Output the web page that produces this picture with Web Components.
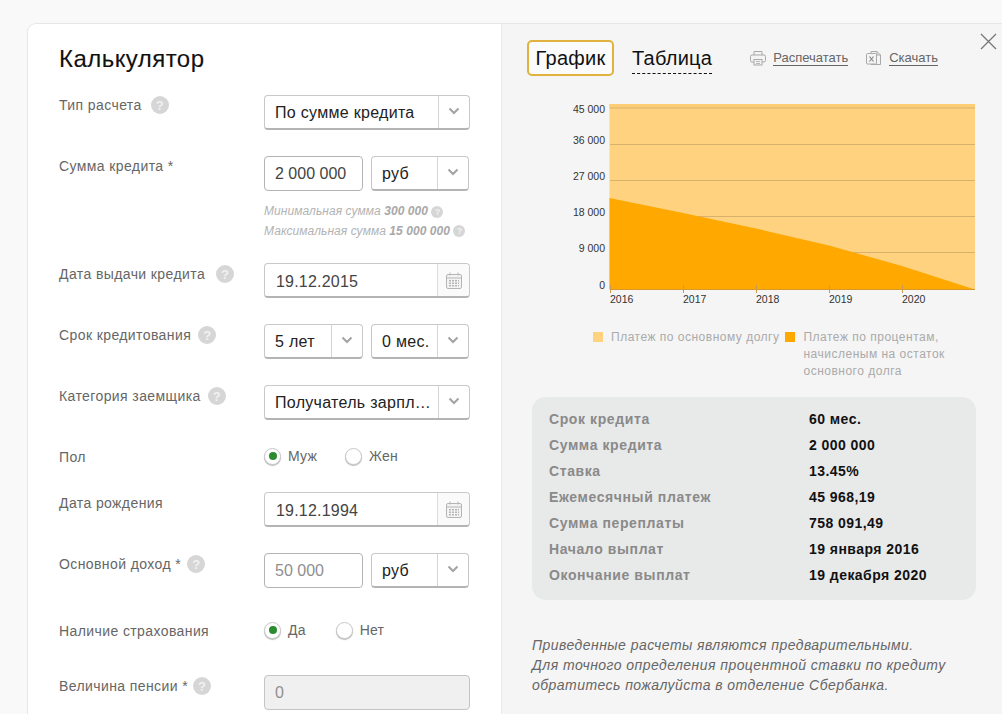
<!DOCTYPE html>
<html lang="ru"><head><meta charset="utf-8"><title>Калькулятор</title>
<style>
html,body{margin:0;height:714px;overflow:hidden;background:#f9f9f9;font-family:"Liberation Sans",Arial,sans-serif}
</style></head><body>
<x-app>
  <x-calculator title="Калькулятор">
    <x-field label="Тип расчета" help="9" up style="margin-bottom:26px"><x-select value="По сумме кредита" w="206" sep="32"></x-select></x-field>
    <x-field label="Сумма кредита *" up style="margin-bottom:26px">
      <x-input value="2 000 000" w="99"></x-input><x-select value="руб" w="98" sep="32"></x-select>
      <x-hints></x-hints>
    </x-field>
    <x-field label="Дата выдачи кредита" help="11" style="margin-bottom:26px"><x-date value="19.12.2015"></x-date></x-field>
    <x-field label="Срок кредитования" help="7" style="margin-bottom:26px"><x-select value="5 лет" w="99" sep="32"></x-select><x-select value="0 мес." w="98" sep="32"></x-select></x-field>
    <x-field label="Категория заемщика" help="7" style="margin-bottom:26px"><x-select value="Получатель зарпл…" w="206" sep="32"></x-select></x-field>
    <x-field label="Пол" short style="margin-bottom:26px"><x-radio a="Муж" b="Жен" gap="28"></x-radio></x-field>
    <x-field label="Дата рождения" style="margin-bottom:26px"><x-date value="19.12.1994"></x-date></x-field>
    <x-field label="Основной доход *" help="6" style="margin-bottom:32px"><x-input value="50 000" w="99" muted></x-input><x-select value="руб" w="98" sep="32"></x-select></x-field>
    <x-field label="Наличие страхования" short style="margin-bottom:35px"><x-radio a="Да" b="Нет" gap="30"></x-radio></x-field>
    <x-field label="Величина пенсии *" help="5"><x-input value="0" w="206" disabled></x-input></x-field>
  </x-calculator>
  <x-panel>
    <x-toolbar></x-toolbar>
    <x-chart></x-chart>
    <x-legend></x-legend>
    <x-results></x-results>
    <x-note></x-note>
  </x-panel>
</x-app>
<script>
const def=(name,html)=>customElements.define(name,class extends HTMLElement{
  connectedCallback(){if(this.shadowRoot)return;const r=this.attachShadow({mode:'open'});
    r.innerHTML=typeof html==='function'?html(this):html;}
});
const chev=`<svg width="12" height="8" viewBox="0 0 12 8"><path d="M1.5 1.5 6 6l4.5-4.5" fill="none" stroke="#a3a3a3" stroke-width="2"/></svg>`;
const cal=`<svg width="16" height="17" viewBox="0 0 16 17" fill="none" stroke="#b5b5b5"><rect x=".5" y="2.5" width="15" height="14" rx="1.5" fill="#f4f4f4"/><path d="M.5 6h15M4 .5v3M12 .5v3"/><path stroke-width="1.4" stroke-dasharray="2 1" d="M3 8.7h10M3 11.2h10M3 13.7h10"/></svg>`;
const q=(s,f)=>`<span style="display:inline-flex;align-items:center;justify-content:center;width:${s}px;height:${s}px;border-radius:50%;background:#d6d6d6;color:#f1f1f1;font:bold ${f}px 'Liberation Sans',sans-serif;letter-spacing:0;vertical-align:middle">?</span>`;

def('x-app',`<style>:host{display:flex;margin:23px 0 0 27px;height:691px;align-items:stretch;position:relative}</style><slot></slot>`);

def('x-calculator',h=>`<style>
:host{display:block;flex:none;box-sizing:border-box;width:475px;background:#fff;border:1px solid #e6e6e6;border-right:0;border-bottom:0;border-top-left-radius:9px;padding:20px 0 0 31px;overflow:hidden}
h1{font:400 24px/30px "Liberation Sans",sans-serif;color:#111;margin:0 0 21px;letter-spacing:.45px;-webkit-text-stroke:.1px #111}
</style><h1>${h.getAttribute('title')}</h1><slot></slot>`);

def('x-field',h=>{const s=h.hasAttribute('short'),u=h.hasAttribute('up');return `<style>
:host{display:grid;grid-template-columns:205px 206px;align-items:start;${s?'height:20px;':''}}
.l{font-size:14px;line-height:20px;color:#666;margin-top:${u?0:1}px;display:flex;align-items:center;gap:${h.getAttribute('help')||9}px;letter-spacing:.4px;white-space:nowrap}
.c{display:flex;flex-wrap:wrap;column-gap:8px;min-height:${s?20:35}px}
</style><div class="l"><span>${h.getAttribute('label')}</span>${h.hasAttribute('help')?q(18,13):''}</div><div class="c"><slot></slot></div>`});

def('x-select',h=>`<style>
:host{display:flex;box-sizing:border-box;width:${h.getAttribute('w')}px;height:35px;background:#fff;border:1px solid #c9c9c9;border-bottom:2px solid #b4b4b4;border-radius:4px;font-size:16px;color:#222;letter-spacing:.3px}
.v{flex:1;min-width:0;padding:0 0 0 10px;line-height:33px;white-space:nowrap}
.a{flex:none;width:${h.getAttribute('sep')-1}px;border-left:1px solid #d4d4d4;display:flex;align-items:center;justify-content:center;padding-bottom:3px;box-sizing:border-box}
</style><div class="v">${h.getAttribute('value')}</div><div class="a">${chev}</div>`);

def('x-input',h=>{const d=h.hasAttribute('disabled'),m=h.hasAttribute('muted');return `<style>
:host{display:block;box-sizing:border-box;width:${h.getAttribute('w')}px;height:35px;background:${d?'#f0f0f0':'#fff'};border:1px solid ${d?'#c4c4c4':'#b3b3b3'};border-radius:4px;font-size:16px;line-height:33px;padding:0 10px;color:${d||m?'#8f8f8f':'#444'}}
</style>${h.getAttribute('value')}`});

def('x-date',h=>`<style>
:host{display:flex;box-sizing:border-box;width:206px;height:35px;background:#fff;border:1px solid #c9c9c9;border-bottom:2px solid #b4b4b4;border-radius:4px;font-size:16px;color:#444;letter-spacing:.2px}
.v{flex:1;padding-left:11px;line-height:35px}
.a{width:31px;border-left:1px solid #dcdcdc;display:flex;align-items:center;justify-content:center;background:#fafafa;border-radius:0 4px 4px 0}
</style><div class="v">${h.getAttribute('value')}</div><div class="a">${cal}</div>`);

def('x-hints',`<style>
:host{display:block;width:100%;height:35px;margin-top:11px;font:italic 12px/19.5px "Liberation Sans",sans-serif;color:#b3b3b3;white-space:nowrap;letter-spacing:.06px}
b{color:#a8a8a8}
</style><div>Минимальная сумма <b>300 000</b> ${q(12,9)}</div><div>Максимальная сумма <b>15 000 000</b> ${q(12,9)}</div>`);

const rb=(on)=>`<span class="r">${on?'<i></i>':''}</span>`;
def('x-radio',h=>`<style>
:host{display:flex;align-items:center;height:20px;font-size:14px;color:#666;letter-spacing:.2px}
.r{box-sizing:border-box;width:17px;height:17px;border-radius:50%;border:1px solid #c8c8c8;background:#fff;box-shadow:0 1px 1px #bbb;display:inline-flex;align-items:center;justify-content:center;margin-right:7px;flex:none}
i{width:8px;height:8px;border-radius:50%;background:#2a8c2f}
.g{width:${h.getAttribute('gap')}px}
</style>${rb(1)}<span>${h.getAttribute('a')}</span><span class="g"></span>${rb(0)}<span>${h.getAttribute('b')}</span>`);

def('x-panel',`<style>:host{display:block;flex:none;width:501px;background:#f5f5f5;border-top:1px solid #e6e6e6;padding:16px 0 0 30px;box-sizing:border-box;border-left:1px solid #e9e9e9;margin-left:-1px}</style><slot></slot>`);

def('x-toolbar',`<style>
:host{display:flex;align-items:flex-start;height:36px;margin-left:-5px;color:#111}
.t{box-sizing:border-box;height:36px;line-height:32px;font-size:20px;letter-spacing:.25px;}
.on{width:87px;border:2px solid #e2b23f;border-radius:5px;text-align:center;background:#fbfbfb}
.off{margin-left:18px;position:relative;height:32px;margin-top:2px;line-height:32px;border-bottom:1px dashed #111;}
.a{display:flex;align-items:center;gap:7px;font-size:13px;color:#666;height:36px}
.a span{border-bottom:1px solid #666;line-height:14px;padding-top:1px}
.x{position:absolute;left:953px;top:10px}
</style>
<div class="t on">График</div><div class="t off">Таблица</div>
<div class="a" style="margin-left:38px"><svg width="16" height="16" viewBox="0 0 16 16" fill="#f4f4f4" stroke="#a9a9a9"><path d="M4 5V1.500h8V5"/><rect x=".5" y="5" width="15" height="7" rx="1.500"/><rect x="4" y="9.500" width="8" height="5.500"/><path d="M6 11.500h4M6 13.500h4" stroke-width=".8"/></svg><span>Распечатать</span></div>
<div class="a" style="margin-left:17px"><svg width="17" height="17" viewBox="0 0 17 17" fill="#f4f4f4" stroke="#a9a9a9"><path d="M6 1.500h6l3.500 3.500V14.500H6z"/><path d="M12 1.500v3.500h3.500" fill="none"/><rect x="1.500" y="3.500" width="10" height="10.500" rx="1"/><path d="M4.500 6.500 8.500 11.500M8.500 6.500 4.500 11.500" stroke="#888" stroke-width="1.200"/></svg><span>Скачать</span></div>
<svg class="x" width="17" height="17" viewBox="0 0 17 17"><path d="M1 1l15 15M16 1 1 16" stroke="#777" stroke-width="1.300"/></svg>`);

def('x-chart',`<style>
:host{display:block;height:229px;margin:14px 0 0 8px}
svg{display:block;overflow:visible}
text{font:10.500px "Liberation Sans",sans-serif;fill:#333}
</style>
<svg width="460" height="229" viewBox="540 90 460 229">
<rect x="609.500" y="104" width="365.500" height="185.500" fill="#ffd27f"/>
<rect x="609.500" y="104" width="365.500" height="4" fill="#fdce76"/>
<path d="M610 108H975M610 144.500H975M610 180.500H975M610 216.500H975M610 252.500H975" stroke="#d9b16e" stroke-width="1"/>
<path d="M609.500 198 683 213 756 228.500 829 245.500 902 266 975 289.500H609.500Z" fill="#ffa800"/>
<path d="M610 289.500H975" stroke="#d9982a" stroke-width="1"/>
<path d="M610.500 285V293M683.500 285V293M756.500 285V293M829.500 285V293M902.500 285V293" stroke="#c99a4a" stroke-width="1"/>
<g text-anchor="end"><text x="605" y="113">45 000</text><text x="605" y="143.500">36 000</text><text x="605" y="179.500">27 000</text><text x="605" y="215.500">18 000</text><text x="605" y="251.500">9 000</text><text x="605" y="288.500">0</text></g>
<text x="610" y="303">2016</text><text x="683" y="303">2017</text><text x="756" y="303">2018</text><text x="829" y="303">2019</text><text x="902" y="303">2020</text>
</svg>`);

def('x-legend',`<style>
:host{display:flex;margin:10px 0 0 61px;font-size:12px;line-height:17px;color:#aaa;letter-spacing:.5px;height:50px}
.s{width:10px;height:10px;flex:none;margin:3px 8px 0 0}
.a{white-space:nowrap;margin-right:6px}
</style><span class="s" style="background:#ffd27f"></span><span class="a">Платеж по основному долгу</span><span class="s" style="background:#ffa800"></span><span style="white-space:nowrap">Платеж по процентам,<br>начисленым на остаток<br>основного долга</span>`);

def('x-results',`<style>
:host{display:grid;grid-template-columns:260px 1fr;grid-auto-rows:26px;align-items:center;box-sizing:border-box;width:444px;height:203px;margin-top:18px;padding:9px 0 0 17px;background:#e8e9e9;border-radius:14px;font:bold 14px "Liberation Sans",sans-serif;color:#111;letter-spacing:.45px}
span{color:#8a8a8a;letter-spacing:.6px}
</style><span>Срок кредита</span><div>60 мес.</div><span>Сумма кредита</span><div>2 000 000</div><span>Ставка</span><div>13.45%</div><span>Ежемесячный платеж</span><div>45 968,19</div><span>Сумма переплаты</span><div>758 091,49</div><span>Начало выплат</span><div>19 января 2016</div><span>Окончание выплат</span><div>19 декабря 2020</div>`);

def('x-note',`<style>
:host{display:block;margin-top:35px;font:italic 14px/20px "Liberation Sans",sans-serif;color:#666;white-space:nowrap;letter-spacing:.45px}
</style>Приведенные расчеты являются предварительными.<br>Для точного определения процентной ставки по кредиту<br>обратитесь пожалуйста в отделение Сбербанка.`);
</script>
</body></html>
